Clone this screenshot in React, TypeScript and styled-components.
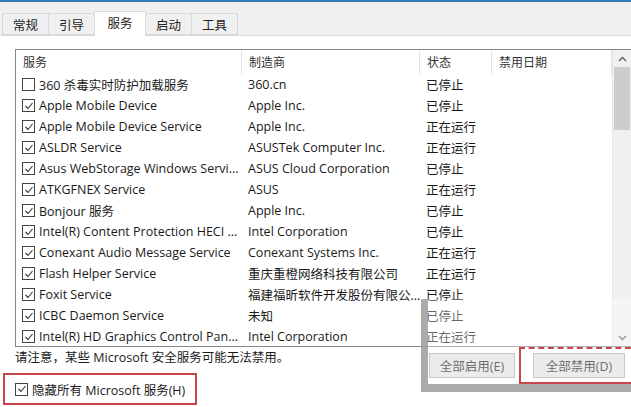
import React from "react";
import styled, { createGlobalStyle } from "styled-components";

const Global = createGlobalStyle`
  html, body { margin: 0; padding: 0; background: #fff; }
  body { width: 631px; height: 407px; overflow: hidden; font-family: "Open Sans", "Noto Sans CJK SC", sans-serif; color: #1a1a1a; }
`;

const Window = styled.div`
  position: relative;
  width: 631px;
  height: 407px;
  border-top: 2px solid #2f7cba;
  box-sizing: border-box;
  background: #fff;
`;

const TabStrip = styled.div`
  display: flex;
  align-items: flex-end;
  height: 34px;
  padding-left: 2px;
  background: #f0f0f0;
  border-bottom: 1px solid #dadada;
  box-sizing: border-box;
`;

const Tab = styled.div<{ $active?: boolean }>`
  width: ${(p) => (p.$active ? 52 : 47)}px;
  height: ${(p) => (p.$active ? 25 : 22)}px;
  margin-bottom: ${(p) => (p.$active ? -1 : 0)}px;
  display: flex;
  align-items: center;
  justify-content: center;
  padding-bottom: ${(p) => (p.$active ? 3 : 0)}px;
  box-sizing: border-box;
  font-family: "Noto Sans CJK SC", sans-serif;
  font-size: 12.5px;
  color: #222;
  background: ${(p) => (p.$active ? "#fff" : "#f0f0f0")};
  border: 1px solid #d9d9d9;
  border-bottom: ${(p) => (p.$active ? "none" : "1px solid #d9d9d9")};
  margin-right: -1px;
`;

const Panel = styled.div`
  padding: 13px 0 0 15px;
`;

const ListBox = styled.div`
  display: flex;
  height: 298px;
  border: 1px solid #828790;
  border-right: none;
  box-sizing: border-box;
`;

const ListMain = styled.div`
  flex: 1;
  overflow: hidden;
`;

const Cols = "226px 178px 72px 1fr";

const HeaderRow = styled.div`
  display: grid;
  grid-template-columns: ${Cols};
  height: 24px;
`;

const HeaderCell = styled.div`
  display: flex;
  align-items: center;
  padding-left: 7px;
  padding-bottom: 2px;
  font-family: "Noto Sans CJK SC", sans-serif;
  font-size: 12px;
  color: #333;
  border-right: 1px solid #e5e5e5;
`;

const Row = styled.div`
  display: grid;
  grid-template-columns: ${Cols};
  height: 21px;
  align-items: center;
  font-size: 12.5px;
  white-space: nowrap;
`;

const Cell = styled.div`
  padding-left: 6px;
  overflow: hidden;
  display: flex;
  align-items: center;
  gap: 4px;
`;

const Box = styled.span`
  width: 11px;
  height: 11px;
  border: 1px solid #444;
  flex: none;
  display: inline-flex;
  align-items: center;
  justify-content: center;
  background: #fff;
`;

const Scrollbar = styled.div`
  width: 18px;
  background: #f0f0f0;
  border-left: 1px solid #e6e6e6;
  display: flex;
  flex-direction: column;
  align-items: center;
`;

const Arrow = styled.div`
  height: 17px;
  display: flex;
  align-items: center;
  justify-content: center;
`;

const Thumb = styled.div`
  width: 16px;
  height: 63px;
  background: #cdcdcd;
`;

const Spacer = styled.div`
  flex: 1;
`;

const Footer = styled.div`
  display: flex;
  justify-content: space-between;
`;

const FooterLeft = styled.div`
  display: flex;
  flex-direction: column;
`;

const Note = styled.div`
  font-size: 12.5px;
  height: 18px;
  display: flex;
  align-items: center;
`;

const HideBox = styled.div`
  margin: 8px 0 0 -12px;
  width: 194px;
  height: 32px;
  border: 2px solid #c9474b;
  box-sizing: border-box;
  display: flex;
  align-items: center;
  gap: 4px;
  padding-left: 10px;
  font-size: 12.5px;
`;

const Buttons = styled.div`
  display: flex;
  gap: 18px;
  margin-top: 6px;
  padding-right: 6px;
`;

const Button = styled.div<{ $w: number }>`
  width: ${(p) => p.$w}px;
  height: 25px;
  background: #e1e1e1;
  border: 1px solid #adadad;
  box-sizing: border-box;
  display: flex;
  align-items: center;
  justify-content: center;
  font-size: 12.5px;
`;

const Watermark = styled.div`
  position: absolute;
  left: 421px;
  top: 297px;
  width: 210px;
  height: 93px;
  box-sizing: border-box;
  border-left: 7px solid rgba(150, 150, 150, 0.8);
  border-bottom: 8px solid rgba(150, 150, 150, 0.8);
  background: rgba(255, 255, 255, 0.35);
  pointer-events: none;
`;

const RedFrame = styled.div`
  position: absolute;
  left: 519px;
  top: 345px;
  width: 112px;
  height: 37px;
  box-sizing: border-box;
  border-top: 2px dashed #c9474b;
  border-left: 2px solid #c9474b;
  border-bottom: 2px solid #c9474b;
  pointer-events: none;
`;

const Check = () => (
  <svg width="10" height="10" viewBox="0 0 10 10">
    <path d="M1.5 5 L4 7.5 L8.5 2" fill="none" stroke="#333" strokeWidth="1.1" />
  </svg>
);

const rows: [boolean, string, string, string][] = [
  [false, "360 杀毒实时防护加载服务", "360.cn", "已停止"],
  [true, "Apple Mobile Device", "Apple Inc.", "已停止"],
  [true, "Apple Mobile Device Service", "Apple Inc.", "正在运行"],
  [true, "ASLDR Service", "ASUSTek Computer Inc.", "正在运行"],
  [true, "Asus WebStorage Windows Servi...", "ASUS Cloud Corporation", "已停止"],
  [true, "ATKGFNEX Service", "ASUS", "正在运行"],
  [true, "Bonjour 服务", "Apple Inc.", "已停止"],
  [true, "Intel(R) Content Protection HECI ...", "Intel Corporation", "已停止"],
  [true, "Conexant Audio Message Service", "Conexant Systems Inc.", "正在运行"],
  [true, "Flash Helper Service", "重庆重橙网络科技有限公司", "正在运行"],
  [true, "Foxit Service", "福建福昕软件开发股份有限公...", "已停止"],
  [true, "ICBC Daemon Service", "未知", "已停止"],
  [true, "Intel(R) HD Graphics Control Pan...", "Intel Corporation", "正在运行"],
];

export default function App() {
  return (
    <Window>
      <Global />
      <TabStrip>
        <Tab>常规</Tab>
        <Tab>引导</Tab>
        <Tab $active>服务</Tab>
        <Tab>启动</Tab>
        <Tab>工具</Tab>
      </TabStrip>
      <Panel>
        <ListBox>
          <ListMain>
            <HeaderRow>
              <HeaderCell>服务</HeaderCell>
              <HeaderCell>制造商</HeaderCell>
              <HeaderCell>状态</HeaderCell>
              <HeaderCell>禁用日期</HeaderCell>
            </HeaderRow>
            {rows.map(([c, n, m, s], i) => (
              <Row key={i}>
                <Cell>
                  <Box>{c && <Check />}</Box>
                  {n}
                </Cell>
                <Cell>{m}</Cell>
                <Cell>{s}</Cell>
                <Cell />
              </Row>
            ))}
          </ListMain>
          <Scrollbar>
            <Arrow>
              <svg width="9" height="6" viewBox="0 0 9 6">
                <path d="M1 5 L4.5 1.5 L8 5" fill="none" stroke="#606060" strokeWidth="1.4" />
              </svg>
            </Arrow>
            <Thumb />
            <Spacer />
            <Arrow>
              <svg width="9" height="6" viewBox="0 0 9 6">
                <path d="M1 1 L4.5 4.5 L8 1" fill="none" stroke="#606060" strokeWidth="1.4" />
              </svg>
            </Arrow>
          </Scrollbar>
        </ListBox>
        <Footer>
          <FooterLeft>
            <Note>请注意，某些 Microsoft 安全服务可能无法禁用。</Note>
            <HideBox>
              <Box>
                <Check />
              </Box>
              隐藏所有 Microsoft 服务(H)
            </HideBox>
          </FooterLeft>
          <Buttons>
            <Button $w={86}>全部启用(E)</Button>
            <Button $w={92}>全部禁用(D)</Button>
          </Buttons>
        </Footer>
      </Panel>
      <Watermark />
      <RedFrame />
    </Window>
  );
}
